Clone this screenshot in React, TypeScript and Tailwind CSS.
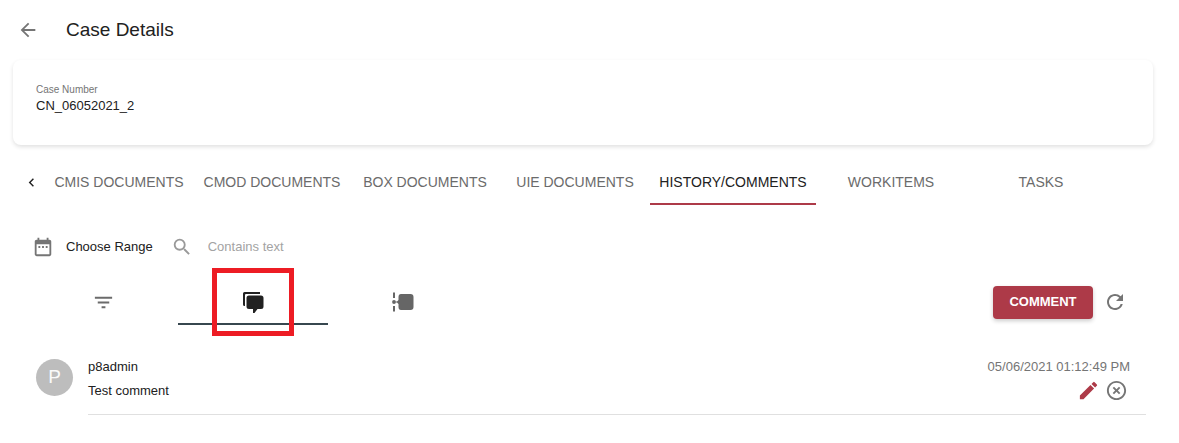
import React from 'react';
import {
  MdArrowBack,
  MdDateRange,
  MdEdit,
  MdFilterList,
  MdHighlightOff,
  MdKeyboardArrowLeft,
  MdRefresh,
  MdSearch,
} from 'react-icons/md';

type Tab = { label: string; width: string; active?: boolean };

const tabs: Tab[] = [
  { label: 'CMIS DOCUMENTS', width: 'w-[150px]' },
  { label: 'CMOD DOCUMENTS', width: 'w-[156px]' },
  { label: 'BOX DOCUMENTS', width: 'w-[150px]' },
  { label: 'UIE DOCUMENTS', width: 'w-[150px]' },
  { label: 'HISTORY/COMMENTS', width: 'w-[166px]', active: true },
  { label: 'WORKITEMS', width: 'w-[150px]' },
  { label: 'TASKS', width: 'w-[150px]' },
];

function CommentsIcon() {
  return (
    <svg width="22" height="22" viewBox="-1 0 22 22" fill="#212121" aria-hidden="true">
      <path d="M1.500 0H17V2H3Q2 2 2 3V14H1.500Q0 14 0 12.500V1.500Q0 0 1.500 0Z" />
      <path d="M6 3.500H18Q20.500 3.500 20.500 6V14.500Q20.500 17 18 17H14.500L11.500 21H10V17H6Q3.500 17 3.500 14.500V6Q3.500 3.500 6 3.500Z" />
    </svg>
  );
}

function TimelineIcon() {
  return (
    <svg width="22" height="20" viewBox="0 0 22 20" fill="#666666" aria-hidden="true">
      <rect x="1" y="0.500" width="2" height="5.500" />
      <rect x="1" y="14" width="2" height="5.500" />
      <circle cx="2" cy="10" r="1.900" />
      <path d="M3.500 9.500H5L6.500 8V5Q6.500 2 9 2H18.500Q21.500 2 21.500 5V15Q21.500 18 18.500 18H9Q6.500 18 6.500 15V12L5 10.600H3.500Z" />
    </svg>
  );
}

export default function App() {
  return (
    <div className="bg-white pb-7 font-['Liberation_Sans',Arial,sans-serif] text-[13px] text-[#212121]">
      <header className="flex h-[60px] items-center gap-[27px] pl-[17px]">
        <button aria-label="Back" className="text-[#757575]">
          <MdArrowBack size={22} />
        </button>
        <h1 className="text-[19px] leading-6">Case Details</h1>
      </header>

      <section className="mr-[26px] ml-[13px] h-[85px] rounded-lg px-[23px] pt-6 shadow-[0_2px_4px_rgba(0,0,0,0.12)]">
        <dl>
          <dt className="text-[10px] leading-3 text-[#757575]">Case Number</dt>
          <dd className="leading-5">CN_06052021_2</dd>
        </dl>
      </section>

      <nav className="mt-[14px] flex h-[46px] items-stretch pl-[19px]" aria-label="Case sections">
        <button aria-label="Scroll tabs left" className="flex w-[25px] items-center justify-center text-[#212121]">
          <MdKeyboardArrowLeft size={17} />
        </button>
        {tabs.map((tab) => (
          <button
            key={tab.label}
            className={`${tab.width} shrink-0 border-b-2 pt-0.5 text-sm whitespace-nowrap ${
              tab.active ? 'border-[#ad3a48] text-[#212121]' : 'border-transparent text-[#6b6b6b]'
            }`}
          >
            {tab.label}
          </button>
        ))}
      </nav>

      <div className="mt-[27px] flex h-[30px] items-center pl-8">
        <button className="flex items-center gap-3">
          <MdDateRange size={22} className="text-[#757575]" />
          Choose Range
        </button>
        <label htmlFor="search" className="ml-[18px] flex w-[37px] text-[#999999]">
          <MdSearch size={22} aria-label="Search" />
        </label>
        <input
          id="search"
          type="text"
          placeholder="Contains text"
          className="w-48 outline-none placeholder:text-[#a3a3a3]"
        />
      </div>

      <div className="mt-[17px] flex items-center pr-[52px] pl-7">
        <button aria-label="Filter" className="flex h-[46px] w-[150px] items-center justify-center text-[#6b6b6b]">
          <MdFilterList size={23} />
        </button>
        <button
          aria-label="Comments"
          className="relative flex h-[46px] w-[150px] items-center justify-center border-b-2 border-[#37474f] pt-1"
        >
          <CommentsIcon />
          <span className="absolute -top-[11px] left-[34px] h-[68px] w-[82px] border-[5px] border-[#ed1c24]" />
        </button>
        <button aria-label="Timeline" className="flex h-[46px] w-[150px] items-center justify-center">
          <TimelineIcon />
        </button>
        <button className="ml-auto h-[33px] w-[100px] rounded bg-[#ad3a48] font-bold text-white shadow-[0_2px_4px_rgba(0,0,0,0.2)]">
          COMMENT
        </button>
        <button aria-label="Refresh" className="ml-[10px] text-[#757575]">
          <MdRefresh size={24} />
        </button>
      </div>

      <article className="mt-[30px] mr-[33px] ml-9 flex gap-[15px]">
        <span className="mt-1 flex size-[37px] shrink-0 items-center justify-center rounded-full bg-[#bdbdbd] text-[19px] text-[#fafafa]">
          P
        </span>
        <div className="flex h-[60px] grow justify-between border-b border-[#e0e0e0] pr-4">
          <div className="leading-6">
            <p>p8admin</p>
            <p>Test comment</p>
          </div>
          <div className="leading-6">
            <time className="block text-[#757575]">05/06/2021 01:12:49 PM</time>
            <div className="flex justify-end gap-[5px] pr-0.5">
              <button aria-label="Edit comment" className="text-[#ad3a48]">
                <MdEdit size={23} />
              </button>
              <button aria-label="Delete comment" className="text-[#757575]">
                <MdHighlightOff size={23} />
              </button>
            </div>
          </div>
        </div>
      </article>
    </div>
  );
}
